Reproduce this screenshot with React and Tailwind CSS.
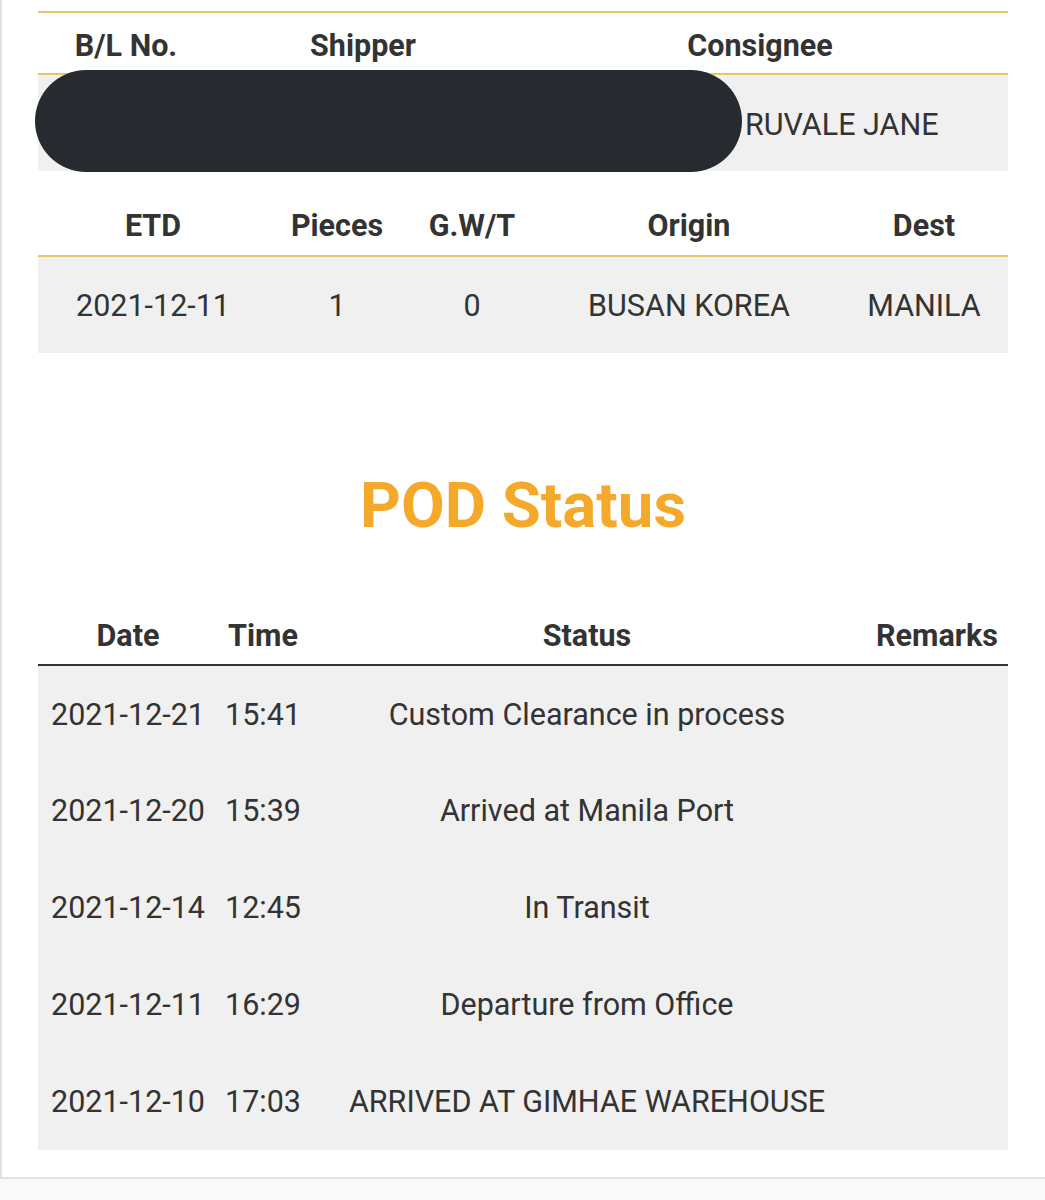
import React from "react";

const font = { fontFamily: "Roboto, 'Noto Sans', 'Liberation Sans', sans-serif" };

const podRows = [
  ["2021-12-21", "15:41", "Custom Clearance in process"],
  ["2021-12-20", "15:39", "Arrived at Manila Port"],
  ["2021-12-14", "12:45", "In Transit"],
  ["2021-12-11", "16:29", "Departure from Office"],
  ["2021-12-10", "17:03", "ARRIVED AT GIMHAE WAREHOUSE"],
];

export default function App() {
  return (
    <div className="w-[1045px] h-[1200px] bg-[#f9f9f9] overflow-hidden text-[#333]" style={font}>
      <div className="bg-white border-l-2 border-b-2 border-[#e2e2e2] h-[1179px] pt-[11px] pl-[36px] pr-[37px]">
        {/* Table 1 */}
        <div className="relative w-[970px] border-t-2 border-[#e3c768]">
          <div className="grid grid-cols-[176px_298px_496px] h-[62px] items-center border-b-2 border-[#e3c768] font-bold text-[30.5px] text-center pt-[5px]">
            <div>B/L No.</div>
            <div>Shipper</div>
            <div>Consignee</div>
          </div>
          <div className="grid grid-cols-[176px_298px_496px] h-[96px] items-center bg-[#f0f0f0] text-[30.5px] pt-[4px]">
            <div></div>
            <div></div>
            <div className="pl-[233px] whitespace-nowrap">RUVALE JANE</div>
          </div>
          <div className="absolute left-[-3px] top-[57px] w-[707px] h-[102px] rounded-[52px] bg-[#272b30]"></div>
        </div>

        {/* Table 2 */}
        <div className="w-[970px] mt-[22px]">
          <div className="grid grid-cols-[230px_138px_132px_302px_168px] h-[64px] items-center border-b-2 border-[#e3c768] font-bold text-[30.5px] text-center pt-[4px]">
            <div>ETD</div>
            <div>Pieces</div>
            <div>G.W/T</div>
            <div>Origin</div>
            <div>Dest</div>
          </div>
          <div className="grid grid-cols-[230px_138px_132px_302px_168px] h-[96px] items-center bg-[#f0f0f0] text-[30.5px] text-center pt-[2px]">
            <div>2021-12-11</div>
            <div>1</div>
            <div>0</div>
            <div>BUSAN KOREA</div>
            <div>MANILA</div>
          </div>
        </div>

        {/* POD Status title */}
        <div className="mt-[116px] w-[970px] text-center text-[63.5px] leading-[74px] font-bold text-[#f5a92b]">
          POD Status
        </div>

        {/* POD table */}
        <div className="w-[970px] mt-[63px]">
          <div className="grid grid-cols-[180px_90px_558px_142px] h-[60px] items-center border-b-2 border-[#333] font-bold text-[30.5px] text-center pt-[1px]">
            <div>Date</div>
            <div>Time</div>
            <div>Status</div>
            <div>Remarks</div>
          </div>
          <div className="bg-[#f0f0f0]">
            {podRows.map((r, i) => (
              <div
                key={i}
                className="grid grid-cols-[180px_90px_558px_142px] h-[96.75px] items-center text-[30.5px] text-center whitespace-nowrap"
              >
                <div>{r[0]}</div>
                <div>{r[1]}</div>
                <div>{r[2]}</div>
                <div></div>
              </div>
            ))}
          </div>
        </div>
      </div>
    </div>
  );
}
